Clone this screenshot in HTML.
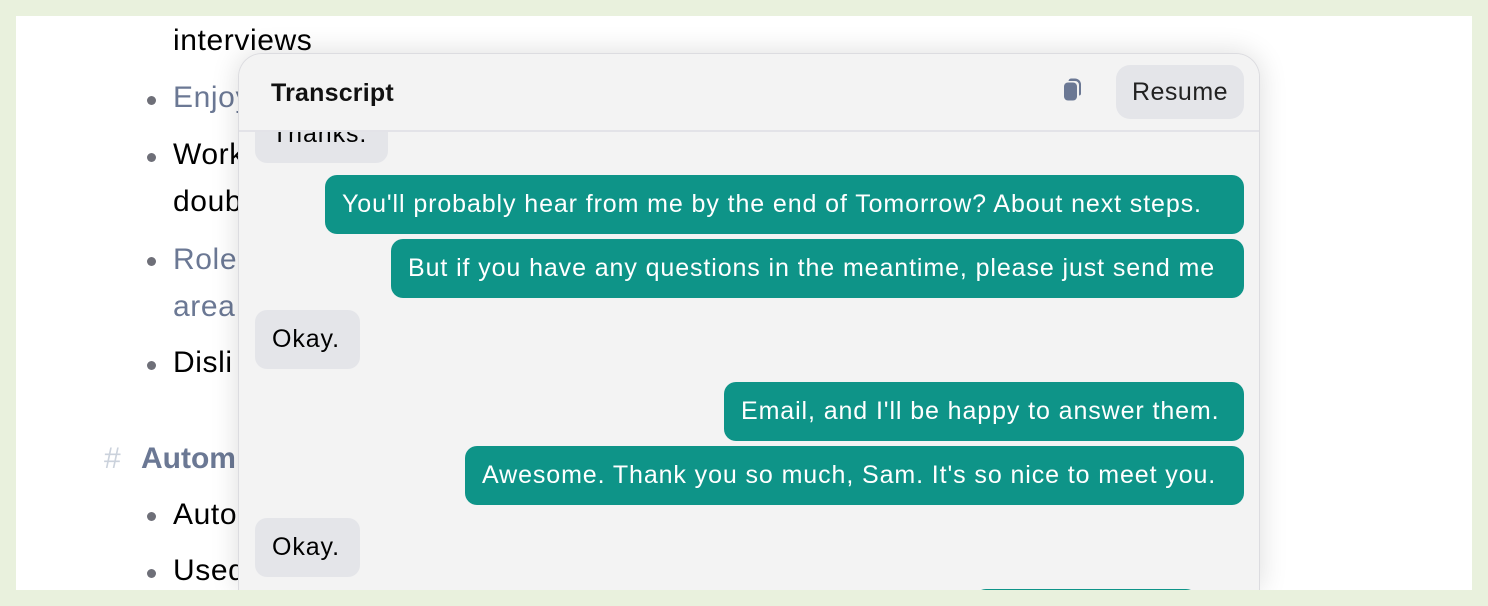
<!DOCTYPE html>
<html><head><meta charset="utf-8"><style>
*{margin:0;padding:0;box-sizing:border-box}
html,body{width:1488px;height:606px;overflow:hidden}
body{background:#e9f1dd;font-family:"Liberation Sans",sans-serif;position:relative}
#page{position:absolute;left:16px;top:16px;width:1456px;height:574px;background:#fff;overflow:hidden}
.l{position:absolute;font-size:30px;letter-spacing:0.6px;color:#000;white-space:nowrap;line-height:34px}
.g{color:#6b7894}
.b{position:absolute;width:9px;height:9px;border-radius:50%;background:#6e6f78}
#panel{position:absolute;left:222px;top:37px;width:1022px;height:537px;background:#f3f3f3;border-radius:24px 24px 0 0;border:1px solid #dcdce0;border-bottom:0;box-shadow:0 0 28px rgba(0,0,0,.14);overflow:hidden}
#hdr{position:absolute;left:0;top:0;width:100%;height:78px;border-bottom:2px solid #e3e3e8;background:#f3f3f3;z-index:2}
.m{position:absolute;height:59px;border-radius:12px;font-size:25px;letter-spacing:0.9px;line-height:59px;padding:0 17px;white-space:nowrap;overflow:hidden}
.t{background:#0e9488;color:#fff}
.u{background:#e4e5e9;color:#000}
</style></head><body>
<div id="page">
<div class="l" style="left:157px;top:8px">interviews</div>
<div class="b" style="left:131px;top:80px"></div><div class="l g" style="left:157px;top:65px">Enjoy</div>
<div class="b" style="left:131px;top:137px"></div><div class="l" style="left:157px;top:122px">Work</div>
<div class="l" style="left:157px;top:169px">doub</div>
<div class="b" style="left:131px;top:241px"></div><div class="l g" style="left:157px;top:227px">Role</div>
<div class="l g" style="left:157px;top:274px">area</div>
<div class="b" style="left:131px;top:345px"></div><div class="l" style="left:157px;top:330px">Disli</div>
<div class="l" style="left:88px;top:426px;color:#cbd2dc">#</div>
<div class="l g" style="left:125px;top:426px;font-weight:bold;letter-spacing:0">Autom</div>
<div class="b" style="left:131px;top:496px"></div><div class="l" style="left:157px;top:482px">Auto</div>
<div class="b" style="left:131px;top:553px"></div><div class="l" style="left:157px;top:538px">Used</div>

<div id="panel">
<div id="hdr">
<div style="position:absolute;left:32px;top:25px;font-size:25px;font-weight:bold;letter-spacing:0.2px;color:#111">Transcript</div>
<svg style="position:absolute;left:822px;top:22px" width="28" height="28" viewBox="0 0 28 28"><path d="M10 2.5h4a6 6 0 0 1 6 6v9a2 2 0 0 1-2 2V9a4 4 0 0 0-4-4H7.5a3 3 0 0 1 2.5-2.5z" fill="#6b7894"/><rect x="3" y="6.5" width="13" height="18" rx="4" fill="#6b7894"/></svg>
<div style="position:absolute;left:877px;top:11px;width:128px;height:54px;border-radius:14px;background:#e4e5e9;font-size:25px;letter-spacing:0.5px;line-height:54px;text-align:center;color:#222">Resume</div>
</div>
<div class="m u" style="left:16px;top:50px;width:133px;line-height:60px">Thanks.</div>
<div class="m t" style="left:86px;top:121px;width:919px">You'll probably hear from me by the end of Tomorrow? About next steps.</div>
<div class="m t" style="left:152px;top:185px;width:853px">But if you have any questions in the meantime, please just send me</div>
<div class="m u" style="left:16px;top:256px;width:105px">Okay.</div>
<div class="m t" style="left:485px;top:328px;width:520px">Email, and I'll be happy to answer them.</div>
<div class="m t" style="left:226px;top:392px;width:779px">Awesome. Thank you so much, Sam. It's so nice to meet you.</div>
<div class="m u" style="left:16px;top:464px;width:105px">Okay.</div>
<div class="m t" style="left:735px;top:535px;width:224px"></div>
</div>
</div>
</body></html>
